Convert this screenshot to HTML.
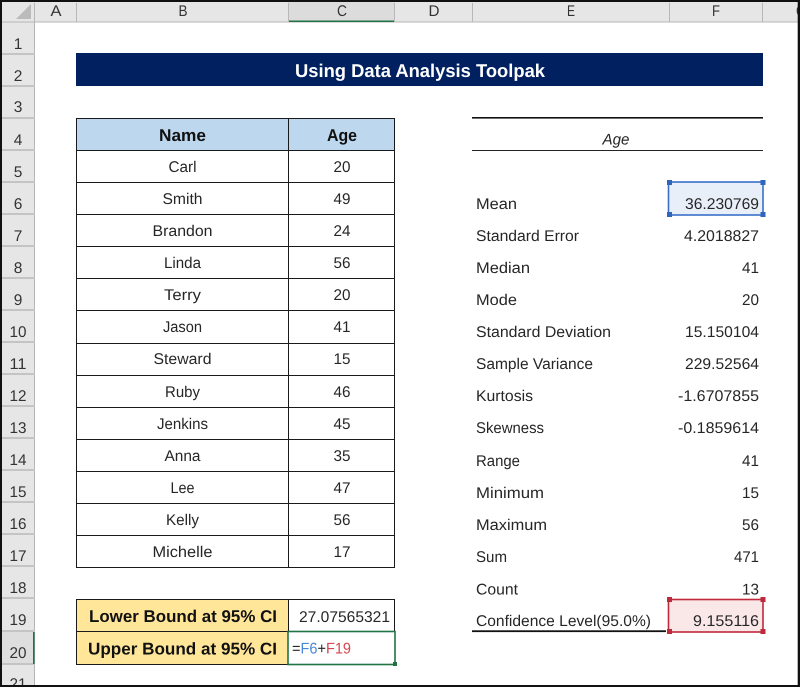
<!DOCTYPE html>
<html><head><meta charset="utf-8"><style>
html,body{margin:0;padding:0;background:#fff;width:800px;height:687px;overflow:hidden}
svg{display:block}
text{font-family:"Liberation Sans",sans-serif;font-size:15.5px;fill:#262626;text-rendering:geometricPrecision}
.c{text-anchor:middle}.e{text-anchor:end}
.h{font-size:15.5px;fill:#333}
.b{font-weight:bold;fill:#111;font-size:17px}
</style></head><body>
<svg width="800" height="687" viewBox="0 0 800 687" xmlns="http://www.w3.org/2000/svg">
<rect width="800" height="687" fill="#fff"/>
<!-- headers -->
<rect x="0" y="0" width="800" height="22" fill="#e6e6e6"/>
<rect x="0" y="0" width="35" height="687" fill="#e6e6e6"/>
<rect x="0" y="21.5" width="800" height="1" fill="#b5b5b5"/>
<rect x="34" y="22" width="1" height="665" fill="#b5b5b5"/>
<polygon points="31,4 31,19 16,19" fill="#bbbbbb"/>
<rect x="288" y="2" width="107" height="19" fill="#dcdcdc"/>
<rect x="288" y="20.5" width="107" height="1.5" fill="#217346"/>
<g fill="#b8b8b8"><rect x="76" y="3" width="1" height="19"/><rect x="288" y="3" width="1" height="19"/><rect x="394" y="3" width="1" height="19"/><rect x="472" y="3" width="1" height="19"/><rect x="669" y="3" width="1" height="19"/><rect x="762" y="3" width="1" height="19"/><rect x="34" y="3" width="1" height="19"/></g>
<g fill="#c4c4c4"><rect x="2" y="53" width="33" height="2"/><rect x="2" y="85" width="33" height="2"/><rect x="2" y="117" width="33" height="2"/><rect x="2" y="149" width="33" height="2"/><rect x="2" y="181" width="33" height="2"/><rect x="2" y="213" width="33" height="2"/><rect x="2" y="245" width="33" height="2"/><rect x="2" y="277" width="33" height="2"/><rect x="2" y="309" width="33" height="2"/><rect x="2" y="341" width="33" height="2"/><rect x="2" y="373" width="33" height="2"/><rect x="2" y="405" width="33" height="2"/><rect x="2" y="437" width="33" height="2"/><rect x="2" y="469" width="33" height="2"/><rect x="2" y="501" width="33" height="2"/><rect x="2" y="533" width="33" height="2"/><rect x="2" y="565" width="33" height="2"/><rect x="2" y="597" width="33" height="2"/><rect x="2" y="630" width="33" height="2"/><rect x="2" y="663" width="33" height="2"/></g>
<rect x="2" y="632" width="32" height="31" fill="#dedede"/>
<rect x="33" y="632" width="1.6" height="32" fill="#217346"/>
<g>
<text class="c h" x="56" y="16" textLength="11" lengthAdjust="spacingAndGlyphs">A</text>
<text class="c h" x="183" y="16" textLength="9" lengthAdjust="spacingAndGlyphs">B</text>
<text class="c h" x="342" y="16" textLength="10" lengthAdjust="spacingAndGlyphs">C</text>
<text class="c h" x="434" y="16" textLength="11" lengthAdjust="spacingAndGlyphs">D</text>
<text class="c h" x="571" y="16" textLength="8" lengthAdjust="spacingAndGlyphs">E</text>
<text class="c h" x="716" y="16" textLength="8" lengthAdjust="spacingAndGlyphs">F</text>
<text class="h" x="796" y="16" textLength="10" lengthAdjust="spacingAndGlyphs">G</text>
</g>
<g>
<text class="c h" x="18" y="49">1</text><text class="c h" x="18" y="81">2</text><text class="c h" x="18" y="112">3</text><text class="c h" x="18" y="145">4</text><text class="c h" x="18" y="177">5</text><text class="c h" x="18" y="209">6</text><text class="c h" x="18" y="241">7</text><text class="c h" x="18" y="273">8</text><text class="c h" x="18" y="305">9</text>
<text class="c h" x="18" y="337" textLength="17" lengthAdjust="spacingAndGlyphs">10</text><text class="c h" x="18" y="369" textLength="17" lengthAdjust="spacingAndGlyphs">11</text><text class="c h" x="18" y="401" textLength="17" lengthAdjust="spacingAndGlyphs">12</text><text class="c h" x="18" y="433" textLength="17" lengthAdjust="spacingAndGlyphs">13</text><text class="c h" x="18" y="465" textLength="17" lengthAdjust="spacingAndGlyphs">14</text><text class="c h" x="18" y="497" textLength="17" lengthAdjust="spacingAndGlyphs">15</text><text class="c h" x="18" y="529" textLength="17" lengthAdjust="spacingAndGlyphs">16</text><text class="c h" x="18" y="561" textLength="17" lengthAdjust="spacingAndGlyphs">17</text><text class="c h" x="18" y="593" textLength="17" lengthAdjust="spacingAndGlyphs">18</text><text class="c h" x="18" y="625" textLength="17" lengthAdjust="spacingAndGlyphs">19</text><text class="c h" x="18" y="658" textLength="17" lengthAdjust="spacingAndGlyphs">20</text>
<text class="c h" x="18" y="689" textLength="17" lengthAdjust="spacingAndGlyphs">21</text>
</g>
<!-- title -->
<rect x="76" y="53" width="687" height="33" fill="#002060"/>
<text class="c" x="420" y="77" textLength="250" lengthAdjust="spacingAndGlyphs" style="font-weight:bold;font-size:18.5px;fill:#fff">Using Data Analysis Toolpak</text>
<!-- left table -->
<rect x="76" y="118" width="319" height="32" fill="#bdd7ee"/>
<g fill="#1a1a1a">
<rect x="76" y="118" width="319" height="1"/><rect x="76" y="150" width="319" height="1"/><rect x="76" y="182" width="319" height="1"/><rect x="76" y="214" width="319" height="1"/><rect x="76" y="246" width="319" height="1"/><rect x="76" y="278" width="319" height="1"/><rect x="76" y="310" width="319" height="1"/><rect x="76" y="343" width="319" height="1"/><rect x="76" y="375" width="319" height="1"/><rect x="76" y="407" width="319" height="1"/><rect x="76" y="439" width="319" height="1"/><rect x="76" y="471" width="319" height="1"/><rect x="76" y="503" width="319" height="1"/><rect x="76" y="535" width="319" height="1"/><rect x="76" y="567" width="319" height="1"/>
<rect x="76" y="118" width="1" height="450"/><rect x="288" y="118" width="1" height="450"/><rect x="394" y="118" width="1" height="450"/>
</g>
<text class="c b" x="182.5" y="141" textLength="47" lengthAdjust="spacingAndGlyphs">Name</text>
<text class="c b" x="342" y="141" textLength="30" lengthAdjust="spacingAndGlyphs">Age</text>
<g>
<text class="c" x="182.5" y="172" textLength="28" lengthAdjust="spacingAndGlyphs">Carl</text><text class="c" x="342" y="172" textLength="17" lengthAdjust="spacingAndGlyphs">20</text>
<text class="c" x="182.5" y="204" textLength="40" lengthAdjust="spacingAndGlyphs">Smith</text><text class="c" x="342" y="204" textLength="17" lengthAdjust="spacingAndGlyphs">49</text>
<text class="c" x="182.5" y="236" textLength="60" lengthAdjust="spacingAndGlyphs">Brandon</text><text class="c" x="342" y="236" textLength="17" lengthAdjust="spacingAndGlyphs">24</text>
<text class="c" x="182.5" y="268" textLength="37" lengthAdjust="spacingAndGlyphs">Linda</text><text class="c" x="342" y="268" textLength="17" lengthAdjust="spacingAndGlyphs">56</text>
<text class="c" x="182.5" y="300" textLength="37" lengthAdjust="spacingAndGlyphs">Terry</text><text class="c" x="342" y="300" textLength="17" lengthAdjust="spacingAndGlyphs">20</text>
<text class="c" x="182.5" y="332" textLength="39" lengthAdjust="spacingAndGlyphs">Jason</text><text class="c" x="342" y="332" textLength="17" lengthAdjust="spacingAndGlyphs">41</text>
<text class="c" x="182.5" y="364" textLength="58" lengthAdjust="spacingAndGlyphs">Steward</text><text class="c" x="342" y="364" textLength="17" lengthAdjust="spacingAndGlyphs">15</text>
<text class="c" x="182.5" y="397" textLength="35" lengthAdjust="spacingAndGlyphs">Ruby</text><text class="c" x="342" y="397" textLength="17" lengthAdjust="spacingAndGlyphs">46</text>
<text class="c" x="182.5" y="429" textLength="51" lengthAdjust="spacingAndGlyphs">Jenkins</text><text class="c" x="342" y="429" textLength="17" lengthAdjust="spacingAndGlyphs">45</text>
<text class="c" x="182.5" y="461" textLength="36" lengthAdjust="spacingAndGlyphs">Anna</text><text class="c" x="342" y="461" textLength="17" lengthAdjust="spacingAndGlyphs">35</text>
<text class="c" x="182.5" y="493" textLength="24" lengthAdjust="spacingAndGlyphs">Lee</text><text class="c" x="342" y="493" textLength="17" lengthAdjust="spacingAndGlyphs">47</text>
<text class="c" x="182.5" y="525" textLength="33" lengthAdjust="spacingAndGlyphs">Kelly</text><text class="c" x="342" y="525" textLength="17" lengthAdjust="spacingAndGlyphs">56</text>
<text class="c" x="182.5" y="557" textLength="60" lengthAdjust="spacingAndGlyphs">Michelle</text><text class="c" x="342" y="557" textLength="17" lengthAdjust="spacingAndGlyphs">17</text>
</g>
<!-- bounds -->
<rect x="76" y="599" width="212" height="65" fill="#ffe699"/>
<g fill="#1a1a1a"><rect x="76" y="599" width="319" height="1"/><rect x="76" y="631" width="319" height="1"/><rect x="76" y="664" width="212" height="1"/><rect x="76" y="599" width="1" height="65"/><rect x="288" y="599" width="1" height="65"/><rect x="394" y="599" width="1" height="33"/></g>
<text class="b" x="89" y="622" textLength="188" lengthAdjust="spacingAndGlyphs">Lower Bound at 95% CI</text>
<text class="b" x="88" y="654.5" textLength="189" lengthAdjust="spacingAndGlyphs">Upper Bound at 95% CI</text>
<text class="e" x="390" y="622" textLength="91" lengthAdjust="spacingAndGlyphs">27.07565321</text>
<rect x="288" y="631.5" width="107" height="33" fill="#fff" stroke="#217346" stroke-width="1.6"/>
<rect x="393" y="662" width="4" height="4" fill="#217346"/>
<text x="292" y="653.5" textLength="59" lengthAdjust="spacingAndGlyphs">=<tspan fill="#4a86d8">F6</tspan>+<tspan fill="#d8444f">F19</tspan></text>
<!-- stats -->
<rect x="472" y="117" width="291" height="1.6" fill="#111"/>
<rect x="472" y="150" width="291" height="1" fill="#222"/>
<text class="c" x="616" y="144.5" textLength="27" lengthAdjust="spacingAndGlyphs" style="font-style:italic">Age</text>
<rect x="668.5" y="182" width="94.5" height="33" fill="#e9eff9" stroke="#3a70c8" stroke-width="1.6"/>
<g fill="#2f65bd"><rect x="667" y="180" width="5" height="5"/><rect x="760.5" y="180" width="5" height="5"/><rect x="667" y="212" width="5" height="5"/><rect x="760.5" y="212" width="5" height="5"/></g>
<rect x="668.5" y="599.5" width="94.5" height="32.5" fill="#fae8e8" stroke="#c0283c" stroke-width="1.6"/>
<rect x="472" y="630.3" width="194" height="1.8" fill="#111"/>
<g fill="#bd2a3c"><rect x="667" y="597" width="5" height="5"/><rect x="760.5" y="597" width="5" height="5"/><rect x="667" y="629" width="5" height="5"/><rect x="760.5" y="629" width="5" height="5"/></g>
<g>
<text x="476" y="209" textLength="41" lengthAdjust="spacingAndGlyphs">Mean</text><text class="e" x="759" y="209" textLength="74" lengthAdjust="spacingAndGlyphs">36.230769</text>
<text x="476" y="241" textLength="103" lengthAdjust="spacingAndGlyphs">Standard Error</text><text class="e" x="759" y="241" textLength="75" lengthAdjust="spacingAndGlyphs">4.2018827</text>
<text x="476" y="273" textLength="54" lengthAdjust="spacingAndGlyphs">Median</text><text class="e" x="759" y="273" textLength="17" lengthAdjust="spacingAndGlyphs">41</text>
<text x="476" y="305" textLength="41" lengthAdjust="spacingAndGlyphs">Mode</text><text class="e" x="759" y="305" textLength="17" lengthAdjust="spacingAndGlyphs">20</text>
<text x="476" y="337" textLength="135" lengthAdjust="spacingAndGlyphs">Standard Deviation</text><text class="e" x="759" y="337" textLength="74" lengthAdjust="spacingAndGlyphs">15.150104</text>
<text x="476" y="369" textLength="117" lengthAdjust="spacingAndGlyphs">Sample Variance</text><text class="e" x="759" y="369" textLength="74" lengthAdjust="spacingAndGlyphs">229.52564</text>
<text x="476" y="401" textLength="57" lengthAdjust="spacingAndGlyphs">Kurtosis</text><text class="e" x="759" y="401" textLength="81" lengthAdjust="spacingAndGlyphs">-1.6707855</text>
<text x="476" y="433" textLength="68" lengthAdjust="spacingAndGlyphs">Skewness</text><text class="e" x="759" y="433" textLength="81" lengthAdjust="spacingAndGlyphs">-0.1859614</text>
<text x="476" y="466" textLength="44" lengthAdjust="spacingAndGlyphs">Range</text><text class="e" x="759" y="466" textLength="17" lengthAdjust="spacingAndGlyphs">41</text>
<text x="476" y="498" textLength="68" lengthAdjust="spacingAndGlyphs">Minimum</text><text class="e" x="759" y="498" textLength="17" lengthAdjust="spacingAndGlyphs">15</text>
<text x="476" y="530" textLength="71" lengthAdjust="spacingAndGlyphs">Maximum</text><text class="e" x="759" y="530" textLength="17" lengthAdjust="spacingAndGlyphs">56</text>
<text x="476" y="562" textLength="31" lengthAdjust="spacingAndGlyphs">Sum</text><text class="e" x="759" y="562" textLength="25" lengthAdjust="spacingAndGlyphs">471</text>
<text x="476" y="594.5" textLength="42" lengthAdjust="spacingAndGlyphs">Count</text><text class="e" x="759" y="594.5" textLength="17" lengthAdjust="spacingAndGlyphs">13</text>
<text x="476" y="626" textLength="175" lengthAdjust="spacingAndGlyphs">Confidence Level(95.0%)</text><text class="e" x="759" y="626" textLength="66" lengthAdjust="spacingAndGlyphs">9.155116</text>
</g>
<!-- frame -->
<rect x="0" y="0" width="800" height="2" fill="#111"/>
<rect x="0" y="0" width="2" height="687" fill="#111"/>
<rect x="797.7" y="0" width="2.3" height="687" fill="#111"/>
<rect x="0" y="685" width="800" height="2" fill="#111"/>
</svg>
</body></html>
